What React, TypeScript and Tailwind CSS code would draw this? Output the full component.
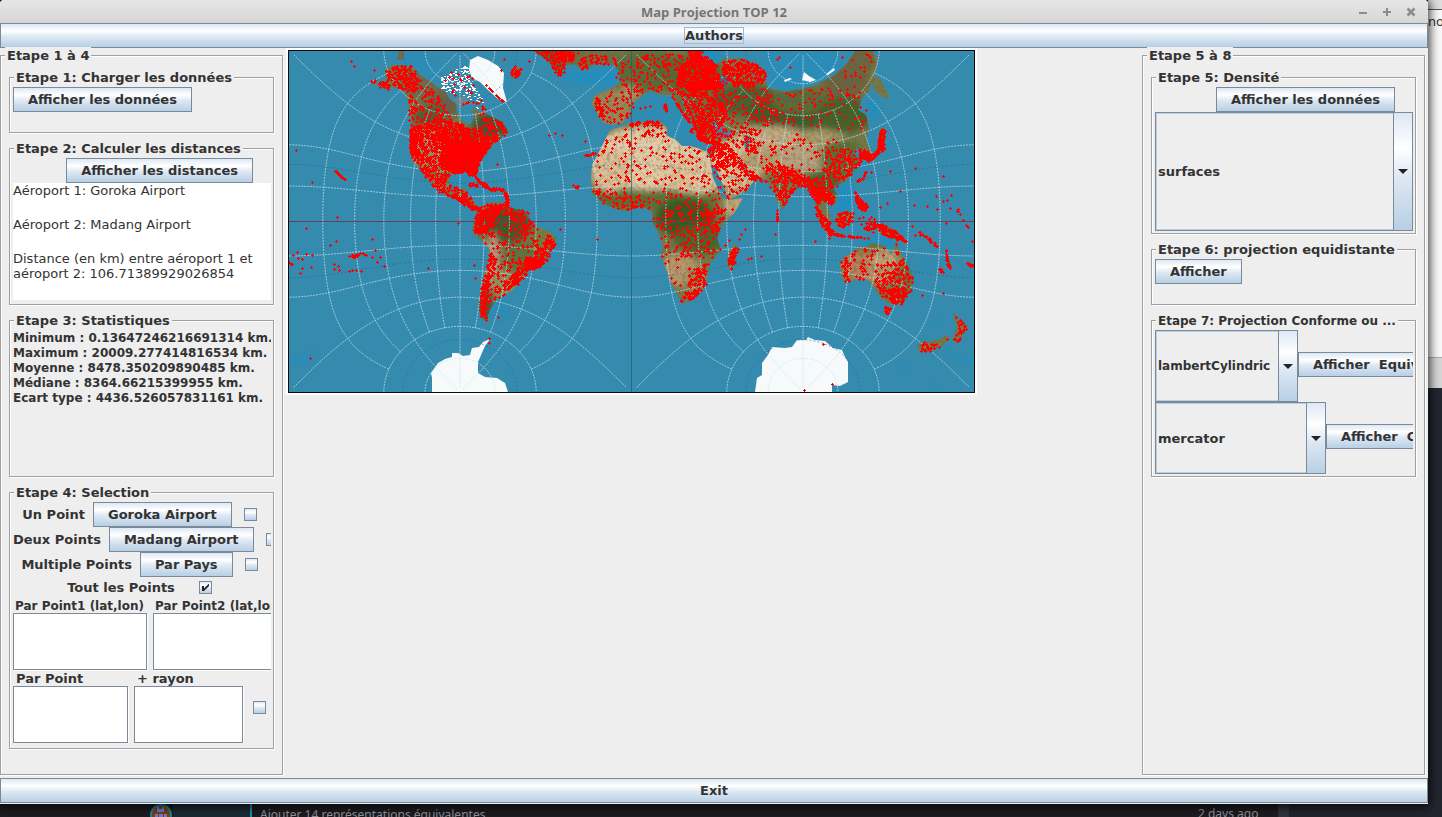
import React, { useId, useMemo } from "react";

type Point = [number, number];

/* ---------- Guyou projection, used for the graticule ---------- */

const PI = Math.PI;
const K1 = (Math.SQRT2 - 1) / (Math.SQRT2 + 1);
const M = 1 - K1 * K1;

function ellipticF(phi: number, m: number): number {
  let a = 1;
  let b = Math.sqrt(1 - m);
  let c = Math.sqrt(m);
  let i = 0;
  for (; Math.abs(c) > 1e-6 && i < 20; i++) {
    if (phi % PI) {
      let d = Math.atan((b * Math.tan(phi)) / a);
      if (d < 0) d += PI;
      phi += d + Math.trunc(phi / PI) * PI;
    } else phi += phi;
    const mean = (a + b) / 2;
    b = Math.sqrt(a * b);
    a = mean;
    c = (a - b) / 2;
  }
  return phi / (Math.pow(2, i) * a);
}

function ellipticFi(phi: number, psi: number): Point {
  const r = Math.abs(phi);
  const s = Math.sinh(Math.abs(psi));
  if (!r) return [0, ellipticF(Math.atan(s), 1 - M) * Math.sign(psi)];
  const csc = 1 / Math.sin(r);
  const cot2 = 1 / (Math.tan(r) * Math.tan(r));
  const b = -(cot2 + M * (s * s * csc * csc) - 1 + M);
  const c = (M - 1) * cot2;
  const l2 = (-b + Math.sqrt(b * b - 4 * c)) / 2;
  return [
    ellipticF(Math.atan(1 / Math.sqrt(l2)), M) * Math.sign(phi),
    ellipticF(Math.atan(Math.sqrt(Math.max(0, (l2 / cot2 - 1) / M))), 1 - M) * Math.sign(psi),
  ];
}

const K = ellipticF(PI / 2, M);

function hemisphere(lambda: number, phi: number): Point {
  const psi = Math.log(Math.tan(PI / 4 + Math.abs(phi) / 2));
  const r = Math.exp(-psi) / Math.sqrt(K1);
  const x = r * Math.cos(-lambda);
  const y = r * Math.sin(-lambda);
  const t = 1 - x * x - y * y;
  const at: Point = [
    0.5 * ((x >= 0 ? PI / 2 : -PI / 2) - Math.atan2(t, 2 * x)),
    -0.25 * Math.log(t * t + 4 * x * x) + 0.5 * Math.log((y + 1) * (y + 1) + x * x),
  ];
  const f = ellipticFi(at[0], at[1]);
  return [-f[1], (phi >= 0 ? 1 : -1) * (0.5 * K - f[0])];
}

const SCALE = 342 / K;

function project(lon: number, lat: number): Point {
  const east = lon > 0;
  const p = hemisphere(((lon + (east ? -90 : 90)) * PI) / 180, (lat * PI) / 180);
  return [(east ? 803 : 460) + p[0] * SCALE, 221 - p[1] * SCALE];
}

function trace(points: Point[]): string {
  return points
    .filter((p) => Number.isFinite(p[0]) && Number.isFinite(p[1]))
    .map((p, i) => `${i ? "L" : "M"}${p[0].toFixed(1)} ${p[1].toFixed(1)}`)
    .join("");
}

function meridian(lon: number, top: number): string {
  const pts: Point[] = [];
  for (let lat = -top; lat <= top; lat += 2) pts.push(project(lon, lat === 0 ? 0.01 : lat));
  return trace(pts);
}

function parallel(lat: number): string {
  return [-180, 0]
    .map((start) => {
      const pts: Point[] = [];
      for (let d = 0; d <= 180; d += 3) {
        pts.push(project(start + Math.min(179.9, Math.max(0.1, d)), lat));
      }
      return trace(pts);
    })
    .join("");
}

/* ---------- Land ---------- */

const NORTH_AMERICA = "368,79 378,83 386,81 385,70 392,65 403,65 414,68 420,75 428,80 436,86 444,90 450,99 456,104 457,112 462,121 470,125 474,117 472,108 479,111 489,115 502,122 509,132 497,140 492,147 485,152 479,160 477,168 475,177 470,173 460,171 452,173 448,182 452,190 458,191 465,186 467,195 473,199 478,208 472,208 466,202 458,198 448,195 437,190 430,181 425,177 419,168 413,162 409,148 412,135 410,115 408,102 405,92 398,88 388,87 378,86";
const BAFFIN = "440,78 449,73 455,70 462,66 468,66 468,78 474,88 482,98 486,108 478,110 468,98 458,92 450,94 441,88";
const GREENLAND = "470,60 478,56 488,60 498,66 504,73 503,88 507,102 498,99 488,90 480,82 472,78 469,70";
const ICELAND = "511,70 516,66 521,69 520,75 514,78 511,75";
const SOUTH_AMERICA = "477,209 487,203 500,202 512,208 525,211 531,221 537,227 548,231 556,237 555,245 549,252 546,262 540,268 530,268 525,276 520,282 510,292 500,297 494,303 490,310 486,321 480,317 479,305 480,292 484,275 489,262 490,250 484,243 475,235 472,228 475,218";
const EURASIA = "533,51 545,58 553,66 559,76 564,73 562,66 575,64 582,70 590,67 600,62 612,64 619,71 620,82 612,88 594,96 592,104 598,115 604,123 613,125 623,123 631,113 632,104 640,98 650,90 657,94 665,95 672,95 676,103 684,116 690,122 688,112 682,102 684,96 690,108 693,128 700,140 708,142 716,143 722,146 716,150 711,157 712,165 716,180 722,195 728,200 745,192 755,180 752,177 745,172 738,163 741,161 748,172 754,178 765,180 768,183 775,192 777,202 783,209 787,202 790,194 800,186 808,188 815,196 817,208 823,214 829,222 831,216 825,202 830,204 835,205 838,195 832,187 845,182 853,172 860,162 853,152 857,148 865,158 872,152 866,140 869,128 866,115 858,110 862,98 870,90 872,78 876,65 873,51 855,51 848,62 835,75 815,85 805,88 785,92 768,88 765,78 758,67 740,60 725,58 715,65 705,62 700,51";
const KAMCHATKA = "872,77 880,78 885,88 890,97 884,98 876,92 872,85";
const AFRICA = "610,130 620,127 632,122 662,122 667,128 666,135 676,140 682,146 690,146 700,149 707,152 711,162 718,178 724,192 728,200 743,198 735,212 722,225 717,238 721,250 711,262 706,280 703,290 695,298 684,303 677,295 670,280 664,263 660,255 663,247 658,232 652,222 653,213 647,208 638,207 625,211 615,209 603,203 592,193 591,180 592,165 600,150";
const MADAGASCAR = "735,244 738,247 735,263 731,270 727,265 728,252";
const AUSTRALIA = "840,265 843,258 853,252 858,247 865,247 872,243 883,245 888,250 891,254 893,250 896,242 900,252 908,265 913,278 912,288 902,303 892,305 883,300 873,287 868,280 855,280 845,283 842,278";
const TASMANIA = "884,307 891,308 889,315 885,313";
const NZ_NORTH = "953,312 958,318 968,327 963,335 957,342 952,340 957,328";
const NZ_SOUTH = "917,345 925,342 938,340 947,335 950,338 942,346 928,352 919,351";
const BORNEO = "836,214 846,211 853,212 852,222 843,228 836,225";
const NEW_GUINEA = "873,224 885,225 895,230 907,242 898,240 888,238 878,231";
const SUMATRA = "815,212 820,214 834,232 831,237 822,226";
const JAPAN = "880,128 885,130 884,150 874,158 866,163 866,158 877,150";
const BRITAIN = "722,61 738,58 756,64 766,72 762,84 748,88 734,86 722,76";
const ANTARCTICA_W = "432,392 432,378 431,373 438,363 445,359 452,357 452,353 458,353 463,356 470,355 472,348 479,347 483,342 490,339 485,346 478,362 478,373 485,377 497,378 505,383 508,392";
const ANTARCTICA_E = "755,392 757,378 762,375 762,363 768,355 772,347 785,348 792,347 797,340 806,340 808,337 815,340 825,341 833,348 842,350 845,357 848,362 848,382 840,386 832,385 832,392";

const LANDS = [
  NORTH_AMERICA, ICELAND, SOUTH_AMERICA, EURASIA, KAMCHATKA, AFRICA, MADAGASCAR, AUSTRALIA,
  TASMANIA, NZ_NORTH, NZ_SOUTH, BORNEO, NEW_GUINEA, SUMATRA, JAPAN, BRITAIN,
];

/* cx, cy, rx, ry, colour */
const TERRAIN: [number, number, number, number, string][] = [
  [425, 85, 24, 16, "#6f6b4c"], [445, 106, 16, 12, "#6b6048"], [430, 118, 16, 12, "#4e5e38"],
  [490, 126, 18, 12, "#3f5230"], [428, 148, 18, 22, "#a08a62"], [470, 150, 18, 18, "#4f6437"],
  [440, 182, 14, 9, "#8b7a4f"], [505, 225, 26, 18, "#3d5a2c"], [545, 240, 12, 12, "#74803f"],
  [520, 258, 22, 16, "#5f7440"], [493, 262, 7, 30, "#b39a80"], [505, 285, 14, 14, "#8f9160"],
  [486, 305, 8, 16, "#4a5a3a"], [545, 60, 20, 14, "#59652f"], [590, 58, 30, 12, "#6e6f46"],
  [612, 108, 24, 18, "#98875a"], [648, 70, 34, 20, "#5b6c3a"], [690, 75, 34, 20, "#566b36"],
  [630, 93, 10, 8, "#a8946a"], [690, 115, 26, 20, "#66703f"], [745, 100, 34, 16, "#4a6030"],
  [790, 115, 44, 16, "#3f5a2b"], [800, 100, 30, 14, "#5f6a38"], [845, 80, 24, 20, "#6e6340"],
  [855, 60, 22, 14, "#706541"], [845, 115, 28, 18, "#46602c"], [770, 140, 40, 14, "#c2ab84"],
  [800, 158, 30, 14, "#b9a280"], [820, 138, 24, 8, "#ab9a6a"], [735, 165, 28, 26, "#d9bd96"],
  [760, 160, 22, 12, "#b59d72"], [785, 185, 18, 16, "#71794a"], [842, 158, 22, 18, "#587038"],
  [822, 185, 18, 14, "#49632f"], [648, 158, 62, 32, "#e4c9a6"], [695, 172, 34, 22, "#dfc29b"],
  [610, 170, 20, 22, "#dbbf9a"], [650, 200, 70, 9, "#5b7035"], [685, 218, 30, 20, "#395824"],
  [700, 240, 26, 14, "#4a662e"], [735, 205, 12, 12, "#c1a379"], [680, 270, 20, 16, "#b9966c"],
  [700, 285, 14, 18, "#8f8355"], [862, 266, 24, 14, "#b5805c"], [885, 262, 14, 12, "#c2a27a"],
  [880, 275, 12, 10, "#b59468"], [880, 246, 16, 5, "#6f7040"], [905, 280, 9, 22, "#66733f"],
];

/* ---------- Airports ---------- */

/* outline, number of airports inside */
const CLUSTERS: [string, number][] = [
  ["386,70 400,64 414,67 420,76 424,90 412,92 398,88 386,86", 170],
  ["368,79 388,83 392,90 378,87", 24],
  ["410,90 425,85 440,95 450,118 470,128 500,122 508,132 490,146 410,135 408,105", 270],
  ["411,128 440,118 462,124 500,138 485,152 478,165 475,176 450,172 428,172 413,160 409,146", 880],
  ["445,142 490,142 486,151 479,162 475,176 468,172 452,172 438,164", 1000],
  ["430,140 440,120 470,130 470,150", 110],
  ["409,135 416,132 418,160 411,155", 60],
  ["418,165 450,174 448,184 466,190 478,208 468,206 437,190 425,178", 190],
  ["476,110 500,120 506,130 488,130", 40],
  ["477,209 489,203 502,204 498,214 484,236 474,232", 220],
  ["498,204 512,208 528,212 534,226 530,235 508,220", 60],
  [SOUTH_AMERICA, 300],
  ["548,231 556,237 552,250 546,262 534,268 524,262 536,250 545,244", 110],
  ["524,258 545,258 540,268 528,269", 120],
  ["490,252 496,260 486,300 486,320 480,316 480,294", 130],
  ["498,290 525,262 528,272 510,290", 90],
  ["535,51 574,51 573,62 564,60 565,75 558,76 548,62", 110],
  ["555,51 574,51 573,60 560,62", 80],
  ["578,52 612,56 608,66 590,68 580,70", 50],
  ["612,58 630,60 634,92 616,86", 26],
  ["594,96 632,88 632,110 622,124 604,122", 60],
  ["594,97 600,100 604,122 596,112", 30],
  ["632,56 690,52 680,95 650,90 634,98", 130],
  ["679,66 700,52 716,64 722,88 690,90 676,82", 560],
  ["688,50 703,50 700,62 690,60", 70],
  [BRITAIN, 290],
  ["674,84 726,80 724,126 696,130 682,100", 320],
  ["684,100 722,100 724,130 718,144 700,140 690,125", 160],
  ["693,128 706,122 722,136 722,145 704,142", 90],
  ["722,90 775,88 778,125 740,132 724,120", 120],
  ["770,95 868,82 866,130 776,125", 90],
  ["840,55 874,52 870,78 838,82", 16],
  ["706,148 726,142 748,168 768,182 750,180 738,164 716,170", 240],
  ["724,128 760,130 758,160 742,150 726,144", 80],
  ["714,160 738,160 752,178 744,192 728,198 718,178", 70],
  ["750,145 800,132 838,140 830,172 800,175 760,170", 80],
  ["764,160 792,172 812,178 800,187 790,194 784,208 776,196 766,182", 170],
  ["775,160 812,178 824,176 838,186 822,190 802,186 780,174", 150],
  ["806,184 826,188 836,198 832,205 822,200 817,206 811,196", 180],
  ["826,150 854,148 862,162 850,176 834,182 822,172", 140],
  ["857,148 864,150 872,155 866,160 860,158", 50],
  [JAPAN, 110],
  [SUMATRA, 50],
  [BORNEO, 60],
  [NEW_GUINEA, 60],
  ["854,190 858,196 868,206 865,212 857,206", 90],
  ["858,214 876,218 874,234 860,226", 30],
  [AFRICA, 300],
  ["592,190 602,202 620,210 650,208 648,196 620,192", 60],
  ["640,122 664,122 664,136 644,136", 24],
  ["652,210 700,200 726,205 718,250 700,262 664,250", 140],
  ["700,210 718,205 720,230 706,236", 60],
  ["690,270 709,262 706,284 694,298 680,302 688,284", 110],
  [MADAGASCAR, 44],
  [AUSTRALIA, 100],
  ["876,265 904,258 913,278 911,290 902,303 890,304 874,285", 130],
  ["888,290 911,286 902,304 890,304", 70],
  ["841,262 846,258 848,282 842,280", 24],
  [TASMANIA, 14],
  [NZ_NORTH, 26],
  [NZ_SOUTH, 26],
  [ICELAND, 26],
  ["440,70 468,66 486,110 450,100", 30],
];

/* polyline, number of airports along it, scatter */
const CHAINS: [string, number, number][] = [
  ["335,171 339,174 345,180", 22, 1],
  ["475,177 483,184 492,189 504,190 507,197 506,206", 90, 3],
  ["468,184 480,186", 14, 4],
  ["440,192 458,198 470,207 482,209", 60, 3],
  ["483,82 492,91 500,99 505,102", 18, 1],
  ["672,96 682,112 690,122", 40, 2],
  ["664,104 667,112", 14, 2],
  ["628,124 645,122 660,122", 24, 2],
  ["777,208 777,222", 14, 1],
  ["830,233 845,236 868,238", 50, 1],
  ["866,170 862,178 855,182", 12, 2],
  ["872,222 888,230 906,241", 44, 4],
  ["918,232 928,238 936,246", 28, 2],
  ["945,250 947,260 950,268", 22, 2],
  ["938,267 945,274", 12, 2],
  ["956,204 960,216 968,227", 10, 2],
  ["967,263 973,265", 10, 3],
  ["288,263 292,263", 8, 2],
  ["351,257 364,253", 16, 2],
  ["585,155 596,153", 10, 1],
  ["574,186 578,187", 6, 3],
  ["690,130 700,139 706,142", 24, 3],
  ["815,206 822,216 830,224", 34, 2],
];

/* origin and positions in thirds of a map unit */
const SINGLES: [number, number, number[]][] = [
  [285, 45, [33,315,83,412,156,517,199,48,209,65,267,75,637,358,658,43,793,270,810,266,833,272,900,290,520,535,733,50,650,75,612,520]],
  [285, 215, [65,40,153,80,135,90,263,73,37,113,25,122,63,118,83,120,40,130,52,132,52,160,46,175,80,156,193,125,208,127,270,106,243,122,262,127,285,127,277,142,298,153,147,147,160,153,149,163,162,167,193,168,203,165,215,167,228,170,430,160,567,152,571,191,640,308,76,430,827,44,938,74,612,371,612,384]],
  [625, 45, [795,380,871,370,955,394,825,440,787,475,767,487,868,482,907,484,937,493,933,453,955,468,967,465,980,452,976,490,964,534,458,44,464,38,495,66,738,383,25,187,45,190,62,187,76,185]],
  [625, 215, [571,80,614,70,362,42,350,58,344,74,314,76,300,90,369,134,378,130,408,123,451,57,891,241,956,235,594,387,621,509,538,526,1041,80,780,288,862,34,870,60]],
];

function parse(points: string): Point[] {
  return points.split(" ").map((p) => p.split(",").map(Number) as Point);
}

function inside(x: number, y: number, poly: Point[]): boolean {
  let hit = false;
  for (let i = 0, j = poly.length - 1; i < poly.length; j = i++) {
    const [xi, yi] = poly[i];
    const [xj, yj] = poly[j];
    if (yi > y !== yj > y && x < ((xj - xi) * (y - yi)) / (yj - yi) + xi) hit = !hit;
  }
  return hit;
}

function generator(seed: number) {
  return () => {
    seed = (seed + 0x6d2b79f5) | 0;
    let t = Math.imul(seed ^ (seed >>> 15), 1 | seed);
    t = (t + Math.imul(t ^ (t >>> 7), 61 | t)) ^ t;
    return ((t ^ (t >>> 14)) >>> 0) / 4294967296;
  };
}

function airportsPath(): string {
  const random = generator(12);
  const out: string[] = [];
  const mark = (px: number, py: number) => {
    const x = Math.round(px);
    const y = Math.round(py);
    out.push(`M${x - 1} ${y}h3v1h-3zM${x} ${y - 1}h1v1h-1zM${x} ${y + 1}h1v1h-1z`);
  };
  for (const [outline, count] of CLUSTERS) {
    const poly = parse(outline);
    const xs = poly.map((p) => p[0]);
    const ys = poly.map((p) => p[1]);
    const x0 = Math.min(...xs);
    const y0 = Math.min(...ys);
    const w = Math.max(...xs) - x0;
    const h = Math.max(...ys) - y0;
    let left = count;
    for (let tries = 0; left > 0 && tries < count * 20; tries++) {
      const x = x0 + random() * w;
      const y = y0 + random() * h;
      if (inside(x, y, poly)) {
        mark(x, y);
        left--;
      }
    }
  }
  for (const [line, count, scatter] of CHAINS) {
    const pts = parse(line);
    for (let i = 0; i < count; i++) {
      const t = random() * (pts.length - 1);
      const k = Math.floor(t);
      const f = t - k;
      mark(
        pts[k][0] + (pts[k + 1][0] - pts[k][0]) * f + (random() - 0.5) * scatter,
        pts[k][1] + (pts[k + 1][1] - pts[k][1]) * f + (random() - 0.5) * scatter,
      );
    }
  }
  for (const [ox, oy, list] of SINGLES) {
    for (let i = 0; i < list.length; i += 2) mark(ox + list[i] / 3 - 0.5, oy + list[i + 1] / 3 - 0.5);
  }
  return out.join("");
}

/* white flecks of the arctic archipelago */
function icePath(): string {
  const random = generator(5);
  const poly = parse(BAFFIN);
  const out: string[] = [];
  for (let i = 0; i < 900; i++) {
    const x = 438 + random() * 50;
    const y = 62 + random() * 50;
    if (inside(x, y, poly) && random() > (y - 60) / 60) out.push(`M${Math.round(x)} ${Math.round(y)}h2v1h-2z`);
  }
  return out.join("");
}

function WorldMap() {
  const airports = useMemo(airportsPath, []);
  const ice = useMemo(icePath, []);
  const grid = useMemo(() => {
    const lines: string[] = [];
    for (let lon = -165; lon < 180; lon += 15) {
      if (lon !== 0) lines.push(meridian(lon, lon % 45 === 0 ? 88 : 60));
    }
    for (const lat of [15, 30, 45, 60, 75]) lines.push(parallel(lat), parallel(-lat));
    return lines.join("");
  }, []);
  const tropics = useMemo(() => parallel(23.4) + parallel(-23.4), []);
  const polar = useMemo(() => parallel(66.5) + parallel(-66.5), []);

  return (
    <svg viewBox="288 50 687 343" className="block h-auto w-full border-2 border-white" role="img" aria-label="Carte du monde">
      <defs>
        <clipPath id="land">
          {LANDS.map((p) => (
            <polygon key={p} points={p} />
          ))}
        </clipPath>
        <filter id="soft" x="-30%" y="-30%" width="160%" height="160%">
          <feGaussianBlur stdDeviation="3" />
        </filter>
        <filter id="shelf" x="-30%" y="-30%" width="160%" height="160%">
          <feGaussianBlur stdDeviation="2" />
        </filter>
        <filter id="grain" x="0" y="0" width="100%" height="100%">
          <feTurbulence type="fractalNoise" baseFrequency="0.28" numOctaves="3" seed="4" />
          <feColorMatrix values="0 0 0 0 0.1  0 0 0 0 0.12  0 0 0 0 0.03  2.6 0 0 0 -1.15" />
        </filter>
      </defs>
      <rect x="288" y="50" width="687" height="343" fill="#358bae" />
      <g fill="#1d8fc4" opacity="0.7" filter="url(#shelf)">
        <path d="M560 72L590 72L616 66L616 86L585 84L563 78Z" />
        <path d="M635 104L650 90L672 96L690 120L700 142L680 144L668 128L664 120L632 122Z" opacity="0.35" />
        <path d="M694 50L716 50L722 60L714 66L700 62Z" />
        <path d="M762 52L830 52L845 60L835 76L800 88L770 88Z" opacity="0.6" />
        <path d="M828 190L848 182L856 200L850 214L834 208Z" />
        <path d="M852 250L875 236L896 238L900 262L914 280L905 262L895 244L856 256Z" />
        <path d="M866 115L880 118L878 105L872 96Z" />
        <path d="M855 150L870 150L868 164L856 172Z" />
        <path d="M495 296L506 300L508 318L490 318Z" opacity="0.6" />
        <path d="M288 360L315 352L314 362L292 366Z" opacity="0.6" />
        <path d="M945 352L974 360L972 366L948 356Z" opacity="0.6" />
        <path d="M395 52L420 55L438 68L442 84L420 72L400 62Z" opacity="0.5" />
        <path d="M455 172L475 178L490 192L470 196L452 190Z" opacity="0.5" />
        <circle cx="902" cy="368" r="3" opacity="0.7" />
        <circle cx="935" cy="388" r="3" opacity="0.7" />
        <circle cx="938" cy="323" r="3" opacity="0.7" />
        <circle cx="926" cy="266" r="3" />
      </g>
      <g fill="#77784b">
        {LANDS.map((p) => (
          <polygon key={p} points={p} />
        ))}
        <polygon points="399,50 405,50 403,60 397,60" fill="#6f6b4c" />
        <path d="M874 52L878 60L874 78L870 78Z" />
      </g>
      <g clipPath="url(#land)">
        <g filter="url(#soft)">
          {TERRAIN.map(([cx, cy, rx, ry, fill], i) => (
            <ellipse key={i} cx={cx} cy={cy} rx={rx} ry={ry} fill={fill} />
          ))}
        </g>
        <rect x="288" y="50" width="687" height="343" filter="url(#grain)" opacity="0.4" />
      </g>
      <g fill="#3489ad">
        <path d="M709 126L716 121L722 128L731 132L730 138L720 137L711 133Z" />
        <path d="M746 134L750 136L749 150L745 150L744 142Z" />
        <path d="M711 164L715 166L725 190L727 200L722 197L713 178Z" />
        <path d="M712 78L732 76L724 88L714 86Z" fill="#28749c" />
      </g>
      <g fill="#f7fafb">
        <polygon points={GREENLAND} />
        <polygon points={ANTARCTICA_W} />
        <polygon points={ANTARCTICA_E} />
        <path d={ice} />
        <path d="M784 80L790 78L792 79L785 82ZM804 72L809 76L816 80L810 82L802 80ZM826 74L834 68L835 70L828 75Z" />
      </g>
      <path d="M452 100L464 96L472 104L460 106Z" fill="#8d8577" opacity="0.6" />
      <path d={tropics} fill="none" stroke="#255f78" strokeWidth="1" strokeDasharray="2 2" opacity="0.5" />
      <path d={polar} fill="none" stroke="#2468b4" strokeWidth="1" strokeDasharray="2 2" opacity="0.6" />
      <path d={grid} fill="none" stroke="#c8e6ee" strokeWidth="1" strokeDasharray="2 1" opacity="0.7" />
      <path d="M631.5 50V393" stroke="#245e70" opacity="0.7" />
      <path d="M288 221.500H975" stroke="#6b4152" />
      <path d={airports} fill="#ff0000" shapeRendering="crispEdges" />
      <rect x="288.500" y="50.500" width="686" height="342" fill="none" stroke="#0a0a0a" />
    </svg>
  );
}

/* ---------- Controls ---------- */

const METAL = "border border-[#7a8a99] bg-[linear-gradient(to_bottom,#dde8f3_0%,#ffffff_30%,#dde8f3_55%,#b8cfe5_100%)]";

function MetalButton({ children, className = "" }: { children: React.ReactNode; className?: string }) {
  return (
    <button type="button" className={`h-[25px] shrink-0 px-3.5 font-bold whitespace-pre ${METAL} ${className}`}>
      {children}
    </button>
  );
}

function Group({ title, titleClass = "", className = "", children }: { title: string; titleClass?: string; className?: string; children?: React.ReactNode }) {
  return (
    <fieldset className={`min-w-0 border border-[#9f9f9f] pt-0.5 pr-0.5 pb-0.5 pl-[3px] shadow-[1px_1px_0_#fff,inset_1px_1px_0_#fff] ${className}`}>
      <legend className={`ml-px h-4 bg-[#eeeeee] px-0.5 leading-[18px] font-bold whitespace-nowrap ${titleClass}`}>{title}</legend>
      <div className="overflow-hidden">{children}</div>
    </fieldset>
  );
}

function Column({ title, children }: { title: string; children: React.ReactNode }) {
  return (
    <fieldset className="w-[283px] min-w-0 shrink-0 border border-[#9f9f9f] px-2 shadow-[1px_1px_0_#fff,inset_1px_1px_0_#fff]">
      <legend className="-ml-1 h-4 bg-[#eeeeee] px-0.5 leading-[18px] font-bold">{title}</legend>
      <div className="flex flex-col gap-[7px] pt-[6px]">{children}</div>
    </fieldset>
  );
}

function Combo({ label, options, className }: { label: string; options: string[]; className: string }) {
  return (
    <div className={`relative shrink-0 ${className}`}>
      <select aria-label={label} className="h-full w-full appearance-none border border-[#7a8a99] bg-[#eeeeee] pl-0.5 font-bold shadow-[inset_0_0_0_1px_#b8cfe5]">
        {options.map((o) => (
          <option key={o}>{o}</option>
        ))}
      </select>
      <span className={`pointer-events-none absolute inset-y-0 right-0 flex w-5 items-center justify-center ${METAL}`}>
        <svg width="10" height="5" viewBox="0 0 10 5">
          <path d="M0 0H10L5 5Z" fill="#222" />
        </svg>
      </span>
    </div>
  );
}

function Check({ label, id, checked, className = "" }: { label?: string; id?: string; checked?: boolean; className?: string }) {
  return (
    <span className={`relative mr-[5px] block h-[13px] w-[13px] shrink-0 ${className}`}>
      <input
        type="checkbox"
        id={id}
        aria-label={label}
        defaultChecked={checked}
        className={`peer block h-[13px] w-[13px] appearance-none ${METAL}`}
      />
      <svg viewBox="0 0 13 13" className="pointer-events-none absolute inset-0 hidden peer-checked:block">
        <path d="M3 5H5V7.500L9.500 3H10V5L5 10H3Z" fill="#222" />
      </svg>
    </span>
  );
}

function PointRow({ label, button }: { label: string; button: string }) {
  const id = useId();
  return (
    <div className="flex">
      <div className="mx-auto flex items-center">
        <label htmlFor={id} className="mr-2 font-bold whitespace-nowrap">{label}</label>
        <MetalButton>{button}</MetalButton>
        <Check id={id} className="ml-3" />
      </div>
    </div>
  );
}

function AreaField({ label, className, labelClass = "" }: { label: string; className: string; labelClass?: string }) {
  const id = useId();
  return (
    <div className={`shrink-0 ${className}`}>
      <label htmlFor={id} className={`block h-[15px] font-bold whitespace-nowrap ${labelClass}`}>{label}</label>
      <textarea id={id} className="block h-[57px] w-full resize-none border border-[#7a8a99] bg-white p-0.5 shadow-[1px_1px_0_#fff]" />
    </div>
  );
}

const STATS = [
  "Minimum : 0.13647246216691314 km.",
  "Maximum : 20009.277414816534 km.",
  "Moyenne : 8478.350209890485 km.",
  "Médiane : 8364.66215399955 km.",
  "Ecart type : 4436.526057831161 km.",
];

export default function App() {
  return (
    <div className="flex h-screen min-h-[817px] overflow-hidden bg-[#1b1b20] font-['DejaVu_Sans',sans-serif] text-[13px] leading-[15px] text-[#333333]">
      <div className="flex min-w-0 flex-1 flex-col">
        <main className="relative z-10 flex flex-1 flex-col rounded-t bg-[#eeeeee] shadow-[0_1px_10px_2px_rgba(0,0,0,0.75)]">
          <header className="flex h-[23px] shrink-0 items-center rounded-t bg-linear-to-b from-[#e6e6e6] to-[#d6d6d6]">
            <span className="w-[80px]" />
            <h1 className="flex-1 pt-0.5 text-center font-['Open_Sans',sans-serif] text-[13px] font-bold text-[#757575]">Map Projection TOP 12</h1>
            <div className="flex w-[80px] justify-end gap-3 pr-[11px] text-[#8c8c8c]">
              <button type="button" aria-label="Réduire" className="h-3 w-3">
                <svg viewBox="0 0 12 12"><path d="M2 7H10" stroke="currentColor" strokeWidth="2" /></svg>
              </button>
              <button type="button" aria-label="Agrandir" className="h-3 w-3">
                <svg viewBox="0 0 12 12"><path d="M2 6H10M6 2V10" stroke="currentColor" strokeWidth="2" /></svg>
              </button>
              <button type="button" aria-label="Fermer" className="h-3 w-3">
                <svg viewBox="0 0 12 12"><path d="M2.500 2.500L9.500 9.500M9.500 2.500L2.500 9.500" stroke="currentColor" strokeWidth="2.500" /></svg>
              </button>
            </div>
          </header>

          <MetalButton className="flex w-full items-center justify-center">
            <span className="border border-[#a3b8cc]">Authors</span>
          </MetalButton>

          <div className="flex flex-1 pr-[3px] pb-[3px]">
            <div className="-mt-px flex">
              <Column title="Etape 1 à 4">
                <Group title="Etape 1: Charger les données" className="min-h-16">
                  <MetalButton className="block">Afficher les données</MetalButton>
                </Group>
                <Group title="Etape 2: Calculer les distances" className="min-h-[165px]">
                  <MetalButton className="mr-[18px] ml-auto block">Afficher les distances</MetalButton>
                  <div className="flex h-[117px] flex-col gap-[19px] bg-white">
                    <p>Aéroport 1: Goroka Airport</p>
                    <p>Aéroport 2: Madang Airport</p>
                    <p>Distance (en km) entre aéroport 1 et aéroport 2: 106.71389929026854</p>
                  </div>
                </Group>
                <Group title="Etape 3: Statistiques" className="min-h-[165px]">
                  <div className="pt-px text-[12px] leading-[15px] font-bold whitespace-nowrap">
                    {STATS.map((s) => (
                      <p key={s}>{s}</p>
                    ))}
                  </div>
                </Group>
                <Group title="Etape 4: Selection" className="min-h-[265px]">
                  <PointRow label="Un Point" button="Goroka Airport" />
                  <PointRow label="Deux Points" button="Madang Airport" />
                  <PointRow label="Multiple Points" button="Par Pays" />
                  <div className="flex h-[21px] items-center justify-center">
                    <label htmlFor="all-points" className="mr-6 font-bold">Tout les Points</label>
                    <Check id="all-points" checked />
                  </div>
                  <div className="flex gap-[6px] pb-px">
                    <AreaField label="Par Point1 (lat,lon)" className="w-[134px]" labelClass="pl-0.5 text-[12px] leading-[17px]" />
                    <AreaField label="Par Point2 (lat,lon)" className="w-[134px]" labelClass="pl-0.5 text-[12px] leading-[17px]" />
                  </div>
                  <div className="flex gap-[6px]">
                    <AreaField label="Par Point" className="w-[115px]" labelClass="pl-[3px] leading-[15px]" />
                    <AreaField label="+ rayon" className="w-[109px]" labelClass="pl-[3px] leading-[15px]" />
                    <Check label="Par Point + rayon" className="mt-[30px] ml-1" />
                  </div>
                </Group>
              </Column>
            </div>

            <section className="min-w-0 flex-1 px-[3px]">
              <div className="w-[691px]">
                <WorldMap />
              </div>
            </section>

            <div className="-mt-px flex">
              <Column title="Etape 5 à 8">
                <Group title="Etape 5: Densité" className="min-h-[165px]">
                  <MetalButton className="mr-[18px] ml-auto block">Afficher les données</MetalButton>
                  <Combo label="Densité" options={["surfaces"]} className="h-[119px] w-full" />
                </Group>
                <Group title="Etape 6: projection equidistante" className="min-h-16">
                  <MetalButton className="block">Afficher</MetalButton>
                </Group>
                <Group title="Etape 7: Projection Conforme ou ..." titleClass="text-[12px]" className="min-h-[165px]">
                  <div className="flex items-center">
                    <Combo label="Projection équivalente" options={["lambertCylindric"]} className="h-[72px] w-[143px] text-[12px]" />
                    <MetalButton className="mb-[3px]">{"Afficher  Equivalente"}</MetalButton>
                  </div>
                  <div className="flex items-center">
                    <Combo label="Projection conforme" options={["mercator"]} className="h-[72px] w-[171px]" />
                    <MetalButton className="mb-[3px]">{"Afficher  Conforme"}</MetalButton>
                  </div>
                </Group>
              </Column>
            </div>
          </div>

          <MetalButton className="mb-px w-full">Exit</MetalButton>
        </main>

        <footer className="flex h-[13px] shrink-0 overflow-hidden font-['Noto_Sans',sans-serif] text-[12px] text-[#8d8f94]">
          <div className="flex w-[252px] justify-end border-r-2 border-[#1793a8]">
            <svg width="24" height="13" viewBox="0 0 24 13">
              <circle cx="12" cy="11" r="10" fill="#7a3f10" stroke="#1b8496" strokeWidth="2" />
              <path d="M8 3h2v2h3v-2h2v5h-7zM6 10h3v3h-3zM10 10h4v3h-4zM15 10h3v3h-3z" fill="#6c7ad8" />
            </svg>
            <div className="w-[77px] bg-[#1b2a32]" />
          </div>
          <p className="flex-1 pt-[3px] pl-2 whitespace-nowrap">Ajouter 14 représentations équivalentes</p>
          <p className="w-20 pt-0.5 whitespace-nowrap">2 days ago</p>
          <div className="w-[11px] bg-[#30323c]" />
          <div className="w-[139px] bg-[#22242c]" />
        </footer>
      </div>

      <aside className="flex w-3.5 shrink-0 flex-col overflow-hidden bg-[#23252e]">
        <div className="h-[10px] border-b border-[#555555] bg-[#dddddd]" />
        <div className="h-[347px] bg-[#f7f7f7] pt-1">
          <span className="font-['Noto_Sans',sans-serif]">no</span>
        </div>
        <div className="h-[31px] border-t border-[#aaaaaa] bg-[#d4d4d4]" />
      </aside>
    </div>
  );
}
